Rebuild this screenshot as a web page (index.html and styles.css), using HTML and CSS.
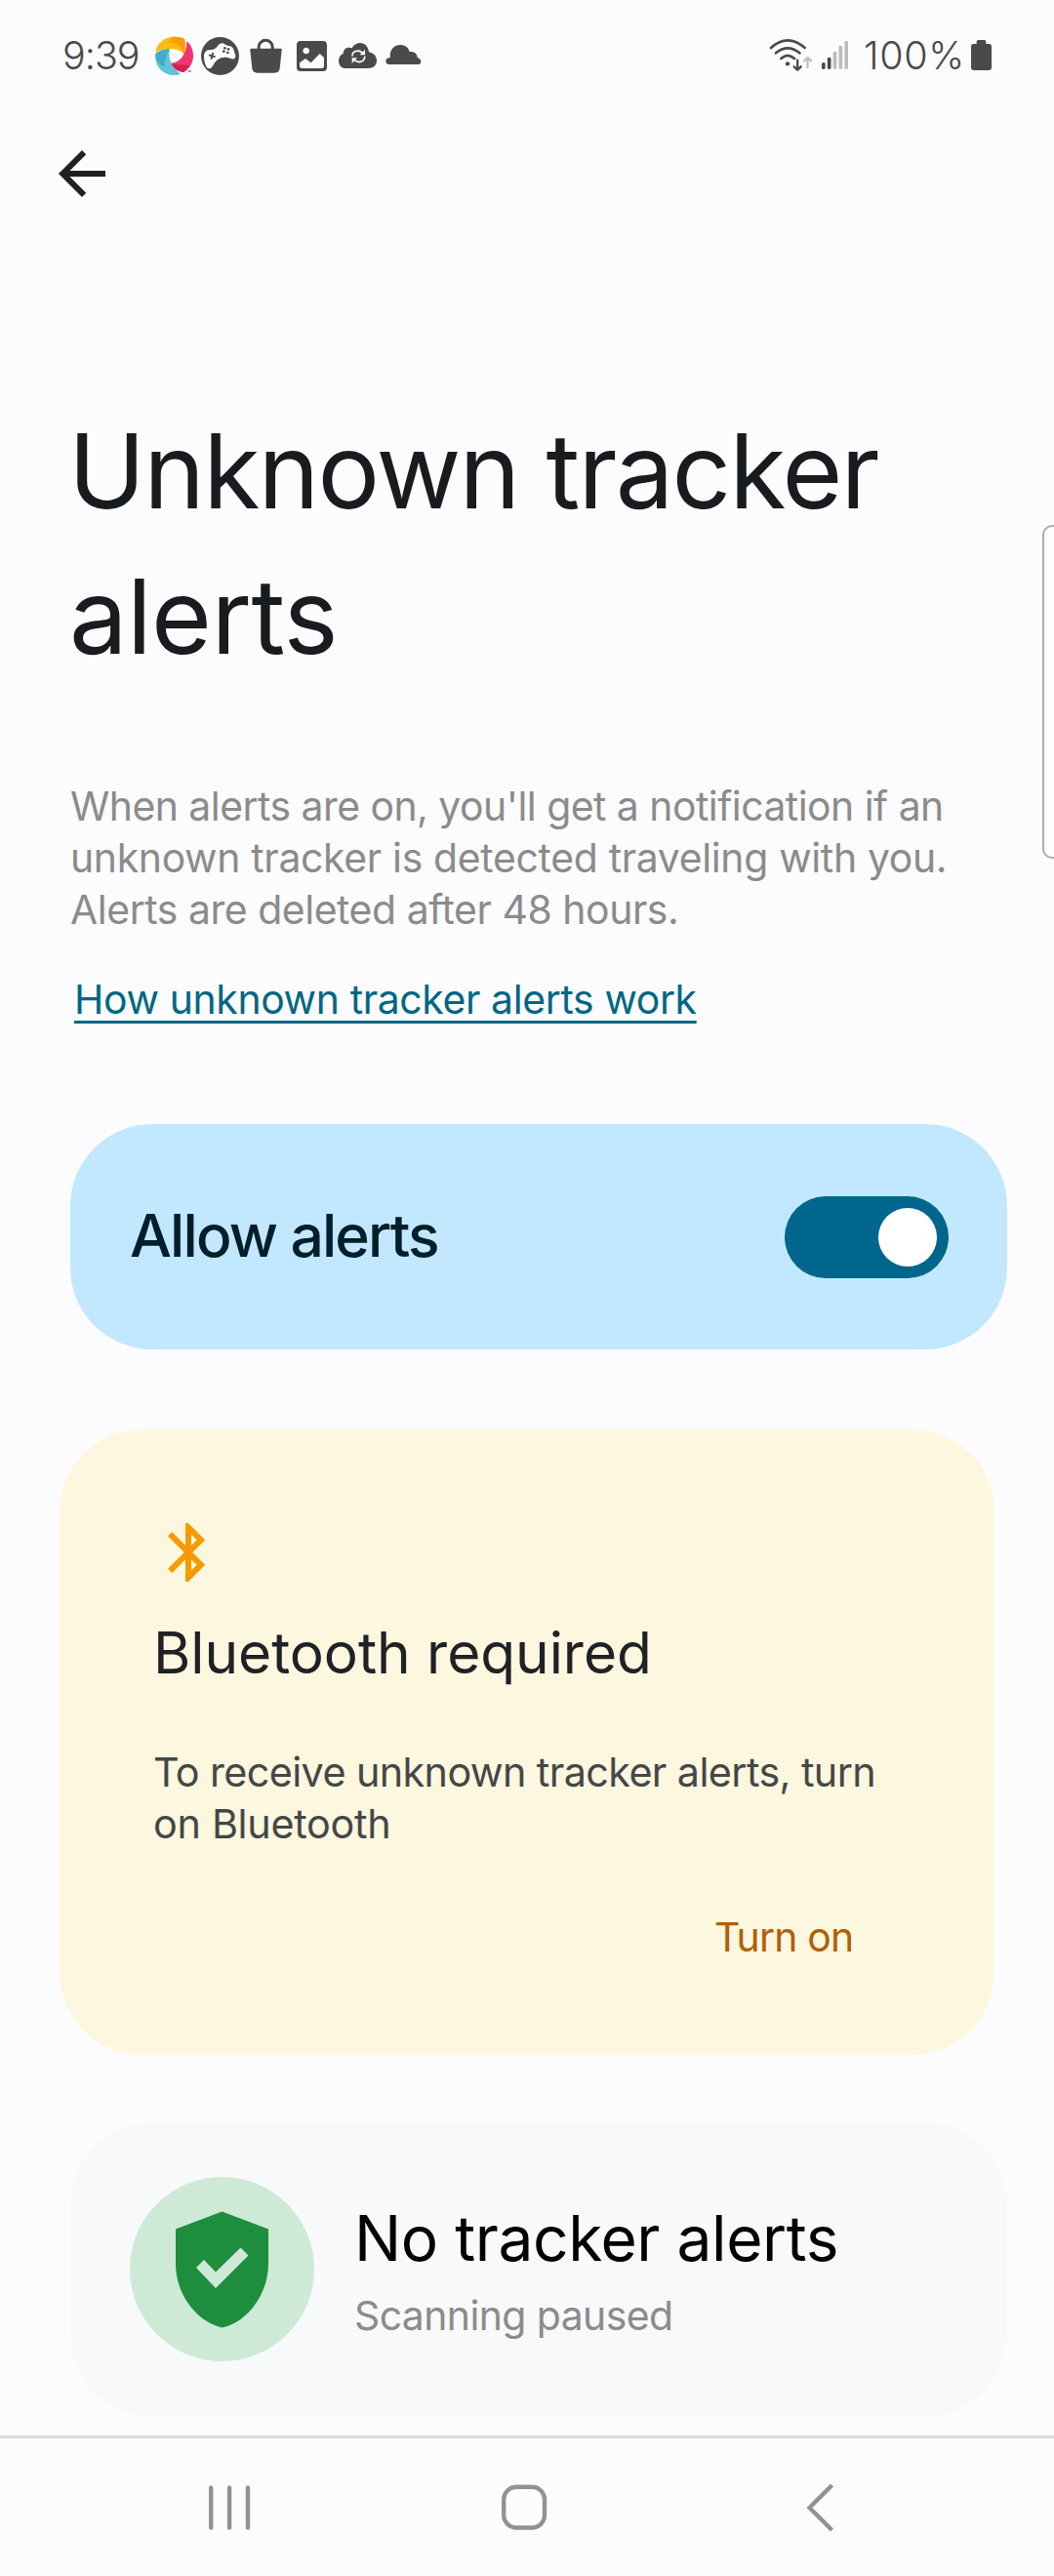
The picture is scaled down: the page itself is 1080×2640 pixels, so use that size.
FILE: index.html
```
<!DOCTYPE html>
<html lang="en">
<head>
<meta charset="utf-8">
<title>Unknown tracker alerts</title>
<link rel="stylesheet" href="styles.css">
</head>
<body>
<div class="screen">
  <header class="status-bar">
    <span class="clock">9:39</span>
    <svg class="icon-swirl" width="39" height="42" viewBox="357 48 117 126">
      <path fill="#fdbb14" d="M358 101C362 70 388 53 416 53C430 53 441 56 448 61C450 80 449 95 445 107C437 97 424 90 404 90C385 90 370 94 358 101Z"/>
      <path fill="#fd9a05" d="M405 54C425 51 440 55 448 61C450 80 449 95 445 107C441 84 430 72 390 70C410 68 412 60 405 54Z"/>
      <path fill="#f0366f" d="M454 67C468 78 474 95 474 112C474 135 462 151 445 162C430 158 412 150 405 134C432 134 453 110 454 67Z"/>
      <path fill="#d61f4e" d="M405 134C425 141 446 138 464 142C459 151 452 157 445 162C425 160 410 149 405 134Z"/>
      <path fill="#62c3dc" d="M357 108C365 97 385 90 402 91C396 112 403 147 435 167C427 171 420 171 414 171C382 171 357 148 357 108Z"/>
      <path fill="#43abc7" d="M357 108C365 97 385 90 402 91C392 108 384 125 386 146C372 140 360 128 357 108Z"/>
      <path fill="#f0366f" d="M456 157h11v4h-6z"/>
    </svg>
    <svg class="icon-game" width="39" height="42" viewBox="498 48 117 126">
      <circle cx="556.500" cy="112.500" r="58.500" fill="#4a4a4a"/>
      <path fill="#fcfcff" d="M507 112C507 101 514 94 524 93C534 93 541 92 547 84C553 75 561 71 568 74C574 76 577 81 584 81C592 82 596 86 598 92L604 110C605 119 599 123 592 121C578 115 562 114 549 124C540 130 537 138 533 145C528 152 518 153 514 145C509 136 507 124 507 112Z"/>
      <path stroke="#4a4a4a" stroke-width="6" d="M522 109l20 6M529 122l6-20"/>
      <g fill="#4a4a4a"><circle cx="571" cy="88" r="4"/><circle cx="582" cy="91" r="4"/><circle cx="568" cy="98" r="4"/><circle cx="580" cy="102" r="4"/></g>
    </svg>
    <svg class="icon-bag" width="33" height="42" viewBox="649 48 99 126">
      <path fill="none" stroke="#4a4a4a" stroke-width="9" d="M676.500 95V84a21 20 0 0 1 42 0V95"/>
      <path fill="#4a4a4a" d="M653 89H744q4 0 3 5L741 150Q739 164 725 164H672Q658 164 656 150L650 94q0-5 3-5Z"/>
    </svg>
    <svg class="icon-photo" width="31" height="42" viewBox="792 48 93 126">
      <path fill="#4a4a4a" fill-rule="evenodd" d="M804 66H873Q885 66 885 78V147Q885 159 873 159H804Q792 159 792 147V78Q792 66 804 66ZM821 86a10 10 0 1 0 .1 0ZM801 133V143Q801 150 808 150H869Q876 150 876 143V117L863 105L836 133L819 120Z"/>
    </svg>
    <svg class="icon-sync" width="39" height="42" viewBox="921 48 117 126">
      <path fill="#4a4a4a" d="M940 150C928 149 921 139 921 127C921 116 927 108 935 105C935 94 942 86 952 86C957 86 960 87 962 88C967 78 976 72 987 72C1002 72 1012 83 1014 100C1028 103 1038 113 1038 127C1038 140 1028 150 1014 150Z"/>
      <path fill="none" stroke="#fcfcff" stroke-width="5" d="M963 113C962 99 980 90 994 102M1001 113C1002 128 984 137 970 125"/>
      <path fill="#fcfcff" d="M1002 92V109H986ZM962 135V118H978Z"/>
    </svg>
    <svg class="icon-cloud" width="37" height="42" viewBox="1065 48 111 126">
      <path fill="#4a4a4a" d="M1077 138C1069 138 1066 133 1066 128C1066 121 1072 117 1080 117C1076 95 1090 78 1111 78C1127 78 1136 88 1139 99C1150 97 1163 103 1163 117C1170 119 1174 123 1174 130C1174 135 1171 138 1166 138Z"/>
    </svg>
    <svg class="icon-wifi" width="45" height="42" viewBox="90 48 135 126" fill="none" stroke="#4a4a4a" stroke-width="8" stroke-linecap="round" stroke-linejoin="round">
      <path d="M96 87Q147 41 200 87M111 103Q147 73 184 103M127 120Q147 101 168 120"/>
      <circle cx="147" cy="136" r="6.500" fill="#4a4a4a" stroke="none"/>
      <path stroke-width="7" d="M177.500 125V154M167 145L177.500 155L188 145"/>
      <path stroke="#c0c0c1" stroke-width="7" d="M208.500 147V118M198 127L208.500 117L219 127"/>
    </svg>
    <svg class="icon-signal" width="28" height="42" viewBox="252 48 84 126">
      <g fill="#4a4a4a"><rect x="252" y="132" width="11" height="21" rx="5"/><rect x="269.500" y="116" width="11" height="37" rx="5"/></g>
      <g fill="#bcbcbd"><rect x="287" y="98" width="11" height="55" rx="5"/><rect x="304.500" y="80" width="11" height="73" rx="5"/><rect x="322" y="65" width="11" height="88" rx="5"/></g>
    </svg>
    <span class="charge">100%</span>
    <svg class="icon-battery" width="21" height="42" viewBox="705 48 63 126">
      <path fill="#4a4a4a" d="M722 75V68Q722 63 727 63H746Q751 63 751 68V75H760Q768 75 768 83V147Q768 156 759 156H714Q705 156 705 147V83Q705 75 713 75Z"/>
    </svg>
  </header>

  <div class="app-bar">
    <svg width="72" height="72" viewBox="0 0 24 24"><path fill="#1f211f" d="M20 11H7.830l5.590-5.590L12 4l-8 8 8 8 1.410-1.410L7.830 13H20v-2z"/></svg>
  </div>

  <main class="content">
    <h1 class="title"><span class="line title-first">Unknown tracker</span><span class="line title-second">alerts</span></h1>
    <p class="intro"><span class="line intro-first">When alerts are on, you'll get a notification if an</span><span class="line intro-second">unknown tracker is detected traveling with you.</span><span class="line intro-third">Alerts are deleted after 48 hours.</span></p>
    <a class="learn-more">How unknown tracker alerts work</a>

    <section class="card allow">
      <span class="allow-label">Allow alerts</span>
      <span class="switch"><span class="knob"></span></span>
    </section>

    <section class="card bluetooth">
      <svg class="bluetooth-icon" width="72" height="72" viewBox="0 0 24 24"><path fill="#f59b00" d="M17.710 7.710L12 2h-1v7.590L6.410 5 5 6.410 10.590 12 5 17.590 6.410 19 11 14.410V22h1l5.710-5.710-4.300-4.290 4.300-4.290zM13 5.830l1.880 1.880L13 9.590V5.830zm1.880 10.460L13 18.170v-3.760l1.880 1.880z"/></svg>
      <h2 class="bluetooth-title">Bluetooth required</h2>
      <p class="bluetooth-text"><span class="line">To receive unknown tracker alerts, turn</span><span class="line bluetooth-last">on Bluetooth</span></p>
      <span class="turn-on">Turn on</span>
    </section>

    <section class="card result">
      <svg class="shield" width="189" height="189" viewBox="133 2231 189 189">
        <circle cx="227.500" cy="2325.500" r="94.500" fill="#ceead6"/>
        <path fill="#1e8e3e" d="M227.500 2266.500L275 2284.500V2320C275 2350 255 2379 227.500 2385.500C200 2379 180 2350 180 2320V2284.500Z"/>
        <path fill="#ceead6" d="M201 2324L209 2316L221 2328.500L246.500 2303.500L254.500 2311.500L221 2345Z"/>
      </svg>
      <div class="result-text">
        <h2 class="result-title">No tracker alerts</h2>
        <p class="result-note">Scanning paused</p>
      </div>
    </section>
  </main>

  <nav class="nav-bar">
    <svg class="recents" width="44" height="50" viewBox="213 2545 44 50" stroke="#929292" stroke-width="4.400" stroke-linecap="round"><path d="M216.200 2549.500V2590.500M235.100 2549.500V2590.500M254 2549.500V2590.500"/></svg>
    <svg class="home" width="48" height="50" viewBox="513 2545 48 50" fill="none" stroke="#929292" stroke-width="4.400"><rect x="516.200" y="2548.700" width="41.800" height="41.800" rx="13"/></svg>
    <svg class="back" width="30" height="50" viewBox="826 2545 30 50" fill="none" stroke="#929292" stroke-width="4.400"><path d="M852.500 2547L829.500 2570L852.500 2593"/></svg>
  </nav>
  <div class="edge-handle"></div>
</div>
</body>
</html>
```
FILE: styles.css
```
* { box-sizing: border-box; }
body {
  margin: 0;
  background: #fcfcff;
  font-family: Inter, "Liberation Sans", sans-serif;
}
h1, h2, p { margin: 0; font-weight: 400; }
svg { display: block; flex: none; }
.screen {
  position: relative;
  display: flex;
  flex-direction: column;
  width: 1080px;
  height: 2640px;
  overflow: hidden;
}
.line { display: block; white-space: nowrap; }

/* Status bar */
.status-bar {
  display: flex;
  height: 112px;
  padding: 36px 64px 0;
  color: #4a4a4a;
  font-size: 39.500px;
  font-weight: 300;
  line-height: 42px;
}
.clock { width: 95px; letter-spacing: -1px; }
.charge { width: 110px; margin-left: 15px; letter-spacing: .6px; }
.icon-game { margin-left: 8px; }
.icon-bag { margin-left: 11px; }
.icon-photo { margin-left: 15px; }
.icon-sync { margin-left: 12px; }
.icon-cloud { margin-left: 9px; }
.icon-wifi { margin-left: auto; }
.icon-signal { margin-left: 9px; }

.app-bar { height: 296px; padding: 30px 48px; }

.content {
  height: 2088px;
  padding-left: 72px;
}
.title {
  color: #191c1e;
  font-size: 106.200px;
  line-height: 149px;
}
.title-first { margin-left: -2px; letter-spacing: -1.810px; }
.title-second { margin-left: -1px; letter-spacing: -.62px; }
.intro {
  margin-top: 94px;
  color: #8b8b8b;
  font-size: 40.900px;
  line-height: 53px;
}
.intro-first { letter-spacing: -.52px; }
.intro-second { letter-spacing: -.32px; }
.intro-third { letter-spacing: -.44px; }
.learn-more {
  display: block;
  width: fit-content;
  margin: 39px 0 0 4px;
  color: #006782;
  font-size: 40.900px;
  line-height: 53px;
  letter-spacing: -.36px;
  text-decoration: underline;
  text-decoration-thickness: 3px;
  text-underline-offset: 7px;
}

.card { border-radius: 84px; }
.allow {
  display: flex;
  align-items: center;
  justify-content: space-between;
  width: 960px;
  height: 231px;
  margin-top: 101px;
  padding: 0 60px 0 61px;
  background: #c1e8ff;
}
.allow-label {
  padding-bottom: 4px;
  color: #001f2a;
  font-size: 60.600px;
  font-weight: 500;
  letter-spacing: -1.850px;
}
.switch {
  display: flex;
  justify-content: flex-end;
  width: 168px;
  height: 84px;
  padding: 12px;
  border-radius: 42px;
  background: #00668b;
}
.knob { width: 60px; height: 60px; border-radius: 50%; background: #fff; }

.bluetooth {
  width: 958px;
  height: 641px;
  margin: 82px 0 0 -11px;
  padding: 90px 0 0 96px;
  background: #fef7e0;
}
.bluetooth-title {
  margin-top: 31px;
  color: #202124;
  font-size: 58.600px;
  line-height: 72px;
  letter-spacing: -.04px;
}
.bluetooth-text {
  margin-top: 60px;
  color: #444746;
  font-size: 41.300px;
  line-height: 53px;
  letter-spacing: -.6px;
}
.bluetooth-last { letter-spacing: -.3px; }
.turn-on {
  display: block;
  margin: 63px 0 0 575px;
  color: #b06000;
  font-size: 40.900px;
  line-height: 53px;
  letter-spacing: -.79px;
}

.result {
  display: flex;
  width: 959px;
  height: 302px;
  margin-top: 69px;
  padding: 56px 0 0 61px;
  background: #f8f9fb;
}
.result-text { margin: 24px 0 0 41px; }
.result-title {
  color: #000;
  font-size: 64px;
  line-height: 78px;
  letter-spacing: -.42px;
}
.result-note {
  margin-top: 15px;
  color: #8b8b8b;
  font-size: 40.900px;
  line-height: 50px;
  letter-spacing: -.57px;
}

.nav-bar {
  display: flex;
  height: 144px;
  padding: 46px 0 0 213px;
  border-top: 3px solid #dcdcdc;
  background: #fcfcfc;
}
.home { margin-left: 256px; }
.back { margin-left: 265px; }

/* Edge panel handle, overlaid on the page and cut off by the screen edge */
.edge-handle {
  position: absolute;
  top: 538px;
  right: -8px;
  width: 20px;
  height: 342px;
  border: 2px solid #acacac;
  border-radius: 14px;
  background: #fdfdff;
}
```
